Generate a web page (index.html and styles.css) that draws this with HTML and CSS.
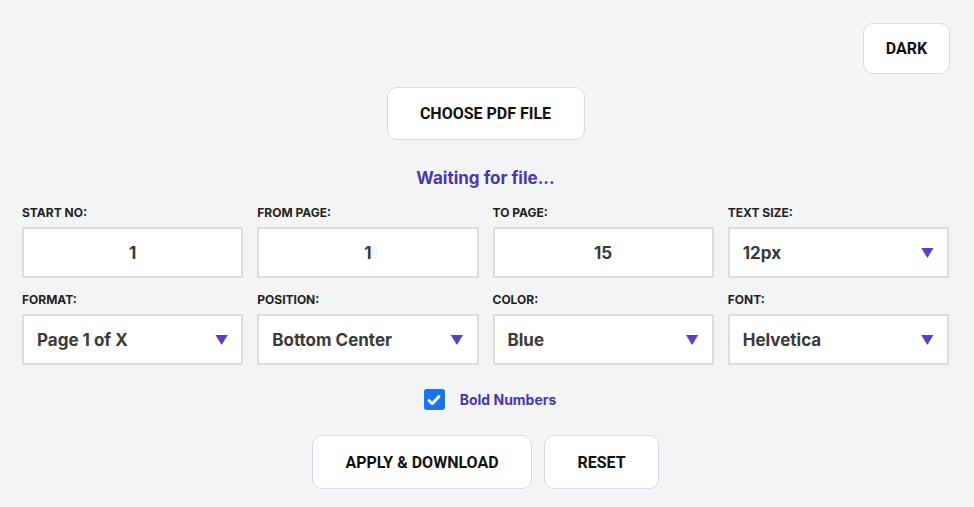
FILE: index.html
```html
<!DOCTYPE html>
<html lang="en">
<head>
 <meta charset="UTF-8">
 <meta name="viewport" content="width=device-width, initial-scale=1.0">
 <title>PDF Page Numbers</title>
 <link rel="stylesheet" href="styles.css">
</head>
<body>
 <div class="topbar">
 <button class="btn btn-dark" type="button">DARK</button>
 </div>
 <div class="upload">
 <button class="btn btn-choose" type="button">CHOOSE PDF FILE</button>
 </div>
 <p class="status">Waiting for file...</p>
 <form class="options" onsubmit="return false;">
 <div class="field">
 <label>START NO:</label>
 <input class="num" type="number" value="1">
 </div>
 <div class="field">
 <label>FROM PAGE:</label>
 <input class="num" type="number" value="1">
 </div>
 <div class="field">
 <label>TO PAGE:</label>
 <input class="num" type="number" value="15">
 </div>
 <div class="field">
 <label>TEXT SIZE:</label>
 <div class="select"><span>12px</span><span class="arrow">&#9660;</span></div>
 </div>
 <div class="field">
 <label>FORMAT:</label>
 <div class="select"><span>Page 1 of X</span><span class="arrow">&#9660;</span></div>
 </div>
 <div class="field">
 <label>POSITION:</label>
 <div class="select"><span>Bottom Center</span><span class="arrow">&#9660;</span></div>
 </div>
 <div class="field">
 <label>COLOR:</label>
 <div class="select"><span>Blue</span><span class="arrow">&#9660;</span></div>
 </div>
 <div class="field">
 <label>FONT:</label>
 <div class="select"><span>Helvetica</span><span class="arrow">&#9660;</span></div>
 </div>
 </form>
 <div class="check">
 <span class="box"><svg width="16" height="16" viewBox="0 0 16 16"><path d="M3 8.5l3.2 3.2L13 4.5" fill="none" stroke="#fff" stroke-width="2.8" stroke-linecap="round" stroke-linejoin="round"/></svg></span>
 <span class="check-label">Bold Numbers</span>
 </div>
 <div class="actions">
 <button class="btn btn-apply" type="button">APPLY &amp; DOWNLOAD</button>
 <button class="btn btn-reset" type="button">RESET</button>
 </div>
</body>
</html>
```

FILE: styles.css
```css
body {
font-family: 'Inter', 'Roboto', sans-serif;
background-color: #f3f4f6;
margin: 0;
padding: 0 25px 0 22px;
color: #333;
}
.btn {
font-family: 'Roboto', sans-serif;
font-weight: 700;
font-size: 16px;
color: #111;
background-color: #fff;
border: 1px solid #d6d8e8;
border-radius: 10px;
cursor: pointer;
}
.topbar {
display: flex;
justify-content: flex-end;
padding-top: 23px;
margin-right: -1px;
}
.btn-dark {
width: 87px;
height: 51px;
}
.upload {
display: flex;
justify-content: center;
margin-top: 13px;
}
.btn-choose {
width: 198px;
height: 53px;
}
.status {
text-align: center;
color: #4a38a6;
font-weight: 700;
font-size: 17px;
margin: 27px 0 0;
line-height: 22px;
}
.options {
display: grid;
grid-template-columns: repeat(4, 1fr);
column-gap: 14px;
row-gap: 15px;
margin-top: 17px;
}
.field label {
display: block;
font-size: 12px;
font-weight: 700;
color: #222;
margin-bottom: 7px;
line-height: 14px;
}
.num, .select {
box-sizing: border-box;
width: 100%;
height: 51px;
background: #fff;
border: 2px solid #dcdcdc;
font-family: 'Inter', sans-serif;
font-size: 17px;
font-weight: 700;
color: #3a3a3a;
}
.num {
text-align: center;
padding: 0;
-moz-appearance: textfield;
}
.num::-webkit-inner-spin-button {
-webkit-appearance: none;
}
.select {
display: flex;
align-items: center;
justify-content: space-between;
padding: 0 13px 0 13px;
}
.arrow {
color: #5a3fc0;
font-size: 13px;
}
.check {
display: flex;
justify-content: center;
align-items: center;
gap: 15px;
margin-top: 24px;
padding-left: 9px;
}
.box {
width: 21px;
height: 21px;
background: #1a73e8;
border-radius: 3px;
display: flex;
align-items: center;
justify-content: center;
}
.check-label {
color: #4a38a6;
font-weight: 700;
font-size: 14px;
}
.actions {
display: flex;
justify-content: center;
gap: 12px;
margin-top: 25px;
}
.btn-apply {
width: 220px;
height: 54px;
}
.btn-reset {
width: 115px;
height: 54px;
}
```
